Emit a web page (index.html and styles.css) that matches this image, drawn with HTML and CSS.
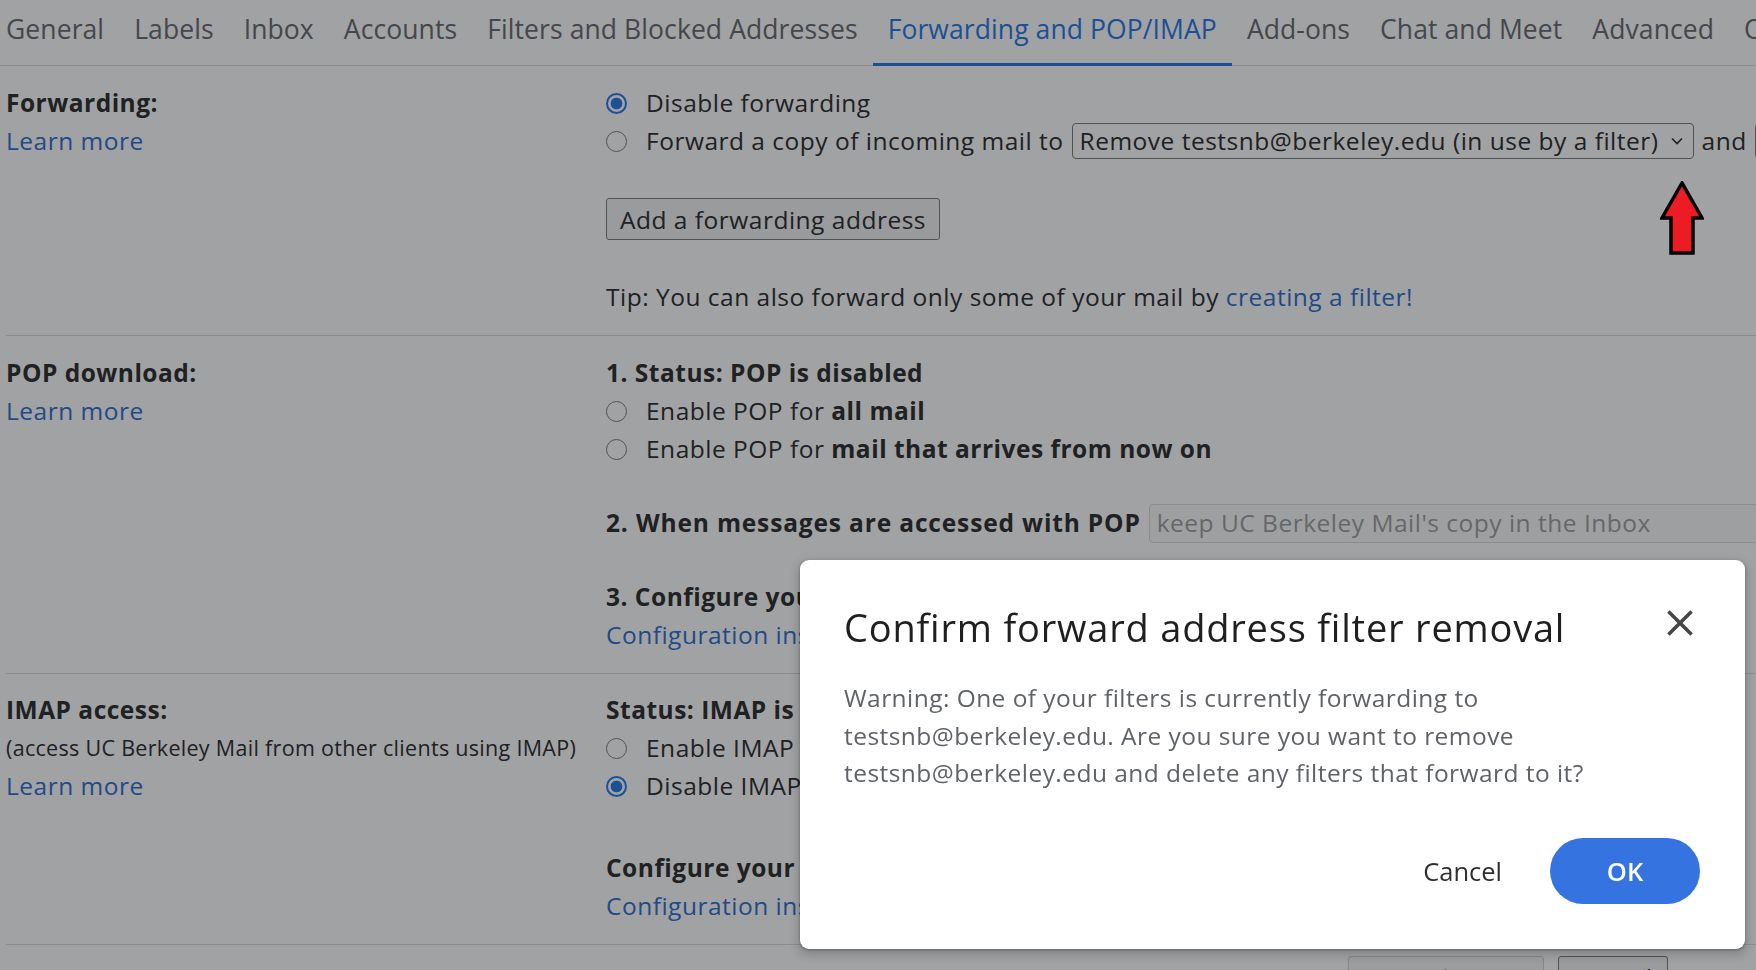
FILE: index.html
```html
<!DOCTYPE html>
<html lang="en">
<head>
<meta charset="utf-8">
<title>Settings - Forwarding and POP/IMAP</title>
<link rel="stylesheet" href="styles.css">
</head>
<body>
<div class="page">
  <nav class="tabs">
    <span class="tab">General</span>
    <span class="tab">Labels</span>
    <span class="tab">Inbox</span>
    <span class="tab">Accounts</span>
    <span class="tab">Filters and Blocked Addresses</span>
    <span class="tab active">Forwarding and POP/IMAP</span>
    <span class="tab">Add-ons</span>
    <span class="tab">Chat and Meet</span>
    <span class="tab">Advanced</span>
    <span class="tab">Offline</span>
    <span class="tab">Themes</span>
  </nav>

  <section class="setting">
    <div class="label">
      <div class="label-title">Forwarding:</div>
      <a class="link" href="#">Learn more</a>
    </div>
    <div class="content">
      <div class="line"><input type="radio" class="radio" name="fwd" checked>Disable forwarding</div>
      <div class="line"><input type="radio" class="radio" name="fwd">Forward a copy of incoming mail to
        <span class="select wide"><span>Remove testsnb@berkeley.edu (in use by a filter)</span>
          <svg class="chev" viewBox="0 0 12 8" width="12" height="8"><path d="M1 1.5l5 5 5-5" fill="none" stroke="#202124" stroke-width="1.6"/></svg>
        </span>and
        <span class="select short"><span>keep UC Berkeley Mail's copy in the Inbox</span></span>
      </div>
      <button class="btn gap-top">Add a forwarding address</button>
      <p class="line gap-top">Tip: You can also forward only some of your mail by&nbsp;<a class="link" href="#">creating a filter!</a></p>
    </div>
  </section>

  <section class="setting">
    <div class="label">
      <div class="label-title">POP download:</div>
      <a class="link" href="#">Learn more</a>
    </div>
    <div class="content">
      <div class="line strong">1. Status: POP is disabled</div>
      <div class="line"><input type="radio" class="radio" name="pop">Enable POP for&nbsp;<b>all mail</b></div>
      <div class="line"><input type="radio" class="radio" name="pop">Enable POP for&nbsp;<b>mail that arrives from now on</b></div>
      <div class="line boxed pop-gap"><b class="wide-bold">2. When messages are accessed with POP</b>
        <span class="select disabled"><span>keep UC Berkeley Mail's copy in the Inbox</span></span>
      </div>
      <div class="line strong pop-gap">3. Configure your email client (e.g. Outlook, Eudora, Netscape Mail)</div>
      <div class="line"><a class="link" href="#">Configuration instructions</a></div>
    </div>
  </section>

  <section class="setting">
    <div class="label">
      <div class="label-title">IMAP access:</div>
      <div class="line sub">(access UC Berkeley Mail from other clients using IMAP)</div>
      <a class="link" href="#">Learn more</a>
    </div>
    <div class="content">
      <div class="line strong">Status: IMAP is disabled</div>
      <div class="line"><input type="radio" class="radio" name="imap">Enable IMAP</div>
      <div class="line"><input type="radio" class="radio" name="imap" checked>Disable IMAP</div>
      <div class="line strong imap-gap">Configure your email client (e.g. Outlook, Thunderbird, iPhone)</div>
      <div class="line"><a class="link" href="#">Configuration instructions</a></div>
    </div>
  </section>

  <div class="footer">
    <button class="btn" disabled>Save Changes</button>
    <button class="btn dark">Cancel</button>
  </div>
</div>

<div class="scrim"></div>

<div class="dialog" role="dialog">
  <div class="dialog-head">
    <h2 class="dialog-title">Confirm forward address filter removal</h2>
    <button class="close" aria-label="Close">
      <svg viewBox="0 0 24 24" width="44" height="44"><path d="M19 6.41 17.59 5 12 10.59 6.41 5 5 6.41 10.59 12 5 17.59 6.41 19 12 13.41 17.59 19 19 17.59 13.41 12z" fill="#444746"/></svg>
    </button>
  </div>
  <p class="dialog-body">Warning: One of your filters is currently forwarding to testsnb@berkeley.edu. Are you sure you want to remove testsnb@berkeley.edu and delete any filters that forward to it?</p>
  <div class="dialog-actions">
    <button class="dbtn text">Cancel</button>
    <button class="dbtn primary">OK</button>
  </div>
</div>

<svg class="arrow" viewBox="0 0 44 75" width="44" height="75">
  <polygon points="22,2 2,37 11,37 11,72 33,72 33,37 42,37" fill="#ed1c24" stroke="#000" stroke-width="3.5" stroke-linejoin="miter"/>
</svg>
</body>
</html>
```

FILE: styles.css
```css
html, body {
  margin: 0;
  padding: 0;
}

body {
  width: 1756px;
  height: 970px;
  overflow: hidden;
  background: #ffffff;
  font-family: "Open Sans", "Noto Sans", sans-serif;
  color: #202124;
  font-size: 24.5px;
  letter-spacing: 0.5px;
  position: relative;
}

.page {
  padding-left: 6px;
  white-space: nowrap;
}

/* Tabs */
.tabs {
  display: flex;
  height: 66px;
  margin-left: -15px;
  box-shadow: inset 0 -1px 0 #dadce0;
}

.tab {
  box-sizing: border-box;
  height: 66px;
  padding: 0 15px 6px;
  display: flex;
  align-items: center;
  font-size: 26.5px;
  letter-spacing: 0.09px;
  color: #5f6368;
  border-bottom: 3px solid transparent;
  flex-shrink: 0;
}

.tab.active {
  color: #1a73e8;
  border-bottom-color: #1a73e8;
}

/* Settings rows */
.setting {
  display: grid;
  grid-template-columns: 600px 1fr;
  border-bottom: 1px solid #dadce0;
  padding: 18px 0 19px;
}

.setting:nth-of-type(3) {
  padding-top: 17px;
}

.label {
  display: flex;
  flex-direction: column;
  line-height: 38px;
}

.label-title {
  font-weight: 700;
}

.link {
  color: #2468cf;
  text-decoration: none;
}

.label .link {
  align-self: flex-start;
}

.sub {
  font-size: 21.5px;
  letter-spacing: 0.3px;
}

.content {
  display: flex;
  flex-direction: column;
  align-items: flex-start;
  line-height: 38px;
}

.line {
  display: flex;
  align-items: center;
  height: 38px;
  margin: 0;
}

.line.boxed {
  height: 40px;
}

.strong {
  font-weight: 700;
}

.wide-bold {
  letter-spacing: 0.85px;
}

.gap-top {
  margin-top: 38px;
}

.pop-gap {
  margin-top: 35px;
}

.imap-gap {
  margin-top: 44px;
}

/* Radios */
.radio {
  appearance: none;
  -webkit-appearance: none;
  box-sizing: border-box;
  width: 21px;
  height: 21px;
  margin: 0 19px 0 0;
  border: 1.6px solid #767676;
  border-radius: 50%;
  background: #ffffff;
  flex-shrink: 0;
}

.radio:checked {
  border: 2px solid #1a73e8;
  background: radial-gradient(circle, #1a73e8 0 5.5px, #ffffff 6.2px);
}

/* Select boxes */
.select {
  box-sizing: border-box;
  display: inline-flex;
  align-items: center;
  height: 36px;
  margin: 0 8px;
  padding: 0 8px 0 7px;
  border: 1px solid #767676;
  border-radius: 4px;
  background: #ffffff;
  flex-shrink: 0;
}

.select.wide {
  width: 622px;
  justify-content: space-between;
}

.select.short {
  width: 300px;
  overflow: hidden;
}

.select.disabled {
  height: 39px;
  width: 720px;
  margin-left: 8px;
  color: #9a9a9a;
  border-color: #dadada;
  background: #fafafa;
}

.chev {
  margin-right: 2px;
}

/* Buttons */
.btn {
  box-sizing: border-box;
  height: 42px;
  padding: 0 13px;
  font-family: inherit;
  font-size: inherit;
  letter-spacing: inherit;
  color: #202124;
  background: #f1f3f4;
  border: 1px solid #767676;
  border-radius: 3px;
}

.btn:disabled {
  color: #aaaaaa;
  border-color: #cfcfcf;
  background: #f6f6f6;
}

.footer {
  display: flex;
  gap: 14px;
  padding: 11px 0 0 1342px;
}

.footer .btn {
  width: 196px;
}

.footer .btn.dark {
  width: 110px;
}

/* Scrim + dialog */
.scrim {
  position: fixed;
  inset: 0;
  background: rgba(32, 33, 36, 0.42);
}

.dialog {
  position: absolute;
  left: 800px;
  top: 560px;
  width: 945px;
  box-sizing: border-box;
  background: #ffffff;
  border-radius: 9px;
  box-shadow: 0 4px 8px 3px rgba(0, 0, 0, 0.15), 0 1px 3px rgba(0, 0, 0, 0.3);
  letter-spacing: 0;
}

.dialog-head {
  display: flex;
  align-items: center;
  justify-content: space-between;
  padding: 43px 43px 0 44px;
}

.dialog-title {
  margin: 0;
  font-size: 38px;
  font-weight: 400;
  letter-spacing: 0.8px;
  line-height: 48px;
  color: #1f1f1f;
}

.close {
  width: 44px;
  height: 44px;
  padding: 0;
  margin-top: -8px;
  border: 0;
  background: transparent;
  display: flex;
}

.dialog-body {
  margin: 0;
  padding: 28px 101px 0 44px;
  font-size: 24.5px;
  letter-spacing: 0.45px;
  line-height: 37.5px;
  color: #5f6368;
  white-space: normal;
}

.dialog-actions {
  display: flex;
  justify-content: flex-end;
  gap: 9px;
  padding: 46px 45px 45px;
}

.dbtn {
  height: 66px;
  border: 0;
  border-radius: 33px;
  font-family: inherit;
  font-size: 25.5px;
  font-weight: 500;
}

.dbtn.text {
  padding: 0 39px;
  background: transparent;
  color: #2d2f31;
}

.dbtn.primary {
  width: 150px;
  background: #3574e0;
  color: #ffffff;
  font-weight: 600;
}

.arrow {
  position: absolute;
  left: 1660px;
  top: 181px;
}
```
